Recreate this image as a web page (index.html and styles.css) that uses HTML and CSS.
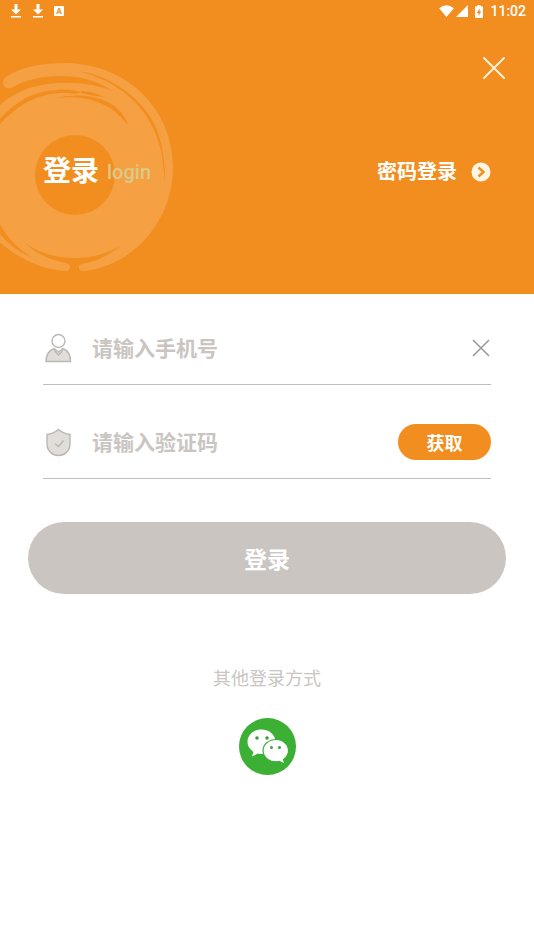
FILE: index.html
```html
<!DOCTYPE html>
<html lang="zh-CN">
<head>
<meta charset="utf-8">
<meta name="viewport" content="width=device-width, initial-scale=1">
<title>登录</title>
<link rel="stylesheet" href="styles.css">
</head>
<body>
<header class="hero">
  <svg class="swirl" viewBox="0 0 180 294" aria-hidden="true">
    <path class="swirl-light" d="M6 77C22 66 44 63 66 63C128 64 173 110 173 167C173 220 134 266 84 271C77 271 77 264 83 263L70 264C71 268 69 271 65 271C40 269 18 259 -5 238V110L0 105C10 96 22 90 33 87C60 80 90 82 113 91C100 83 85 76 60 76C40 76 26 80 13 87C4 92 0 82 6 77Z"/>
    <g class="swirl-dark">
      <circle cx="75" cy="175" r="40"/>
      <path d="M78 71C100 74 127 86 147 112C160 130 165 152 165 182C163 168 163 160 161 150C157 136 153 126 145 114C129 92 108 79 78 71Z"/>
      <path d="M-2 121C14 102 34 91 56 90C66 89 74 90 81 92C78 94 73 94 68 93C40 92 19 103 -2 126Z"/>
      <path d="M57 98C78 93 99 96 113 105C121 111 126 118 128 125C120 116 116 112 110 108C93 98 75 96 57 98ZM81 91C87 91 96 93 104 97C96 96 89 95 81 93Z"/>
      <path d="M24 242C40 254 57 258 75 258C92 258 106 254 120 246C108 256 95 262 82 264C77 265 78 271 82 272H67C72 270 71 264 66 263C50 260 36 254 24 242Z"/>
      <path d="M-2 221C6 236 16 248 33 258C18 252 6 243 -2 231Z"/>
    </g>
  </svg>

  <div class="status">
    <div class="status-group">
      <svg class="glyph-arrow" viewBox="0 0 12 14"><path d="M4.500 0h3v5.500H11L6 10.500 1 5.500h3.500zM1 12h10v1.500H1z"/></svg>
      <svg class="glyph-arrow" viewBox="0 0 12 14"><path d="M4.500 0h3v5.500H11L6 10.500 1 5.500h3.500zM1 12h10v1.500H1z"/></svg>
      <svg class="glyph-app" viewBox="0 0 10 10"><path fill-rule="evenodd" d="M1 0h8q1 0 1 1v8q0 1-1 1H1q-1 0-1-1V1q0-1 1-1zM4.300 2L2.200 8h1.300l.4-1.300h2.200L6.500 8h1.300L5.700 2zM5 3.400l.7 2.200H4.300z"/></svg>
    </div>
    <div class="status-group status-right">
      <svg class="glyph-wifi" viewBox="0 0 16 13"><path d="M0 3.500Q8-3 16 3.500L8 13z"/></svg>
      <svg class="glyph-signal" viewBox="0 0 12 12"><path d="M12 0v12H0z"/></svg>
      <svg class="glyph-battery" viewBox="0 0 8 13"><path fill-rule="evenodd" d="M2.500 0h3v1.300H7q1 0 1 1V12q0 1-1 1H1q-1 0-1-1V2.300q0-1 1-1h1.500zM4.700 3.500L1.800 8h1.700v3l2.800-4.500H4.700z"/></svg>
      <span>11:02</span>
    </div>
  </div>

  <div class="hero-tools">
    <button class="icon-button" type="button" aria-label="关闭">
      <svg class="close-large" viewBox="0 0 24 24"><path d="M2 2l20 20M22 2L2 22"/></svg>
    </button>
  </div>

  <div class="hero-row">
    <h1 class="title">登录 <span class="subtitle">login</span></h1>
    <a class="mode-link" href="#password">密码登录
      <svg class="chevron" viewBox="0 0 20 20"><circle cx="10" cy="10" r="9.500"/><path d="M7.500 5.500l5 4.500-5 4.500"/></svg>
    </a>
  </div>
</header>

<main class="content">
  <form class="form">
    <div class="field">
      <label class="field-icon" for="phone" aria-label="手机号">
        <svg viewBox="0 0 28 30"><path class="fill" d="M2.500 28.500C2.500 21.500 5.500 17.500 10.500 15.500L15 19 19.500 15.500C24.500 17.500 27 21.500 27 28.500Z"/><path class="line" d="M11 15.500L11.500 18.500 15 22 18.500 18.500 19 15.500"/><circle class="head" cx="15" cy="8" r="6.500"/></svg>
      </label>
      <input class="field-input" id="phone" type="tel" placeholder="请输入手机号">
      <button class="icon-button" type="reset" aria-label="清除">
        <svg class="close-small" viewBox="0 0 20 20"><path d="M2 2l16 16M18 2L2 18"/></svg>
      </button>
    </div>
    <div class="field">
      <label class="field-icon" for="code" aria-label="验证码">
        <svg viewBox="0 0 28 30"><path class="fill" d="M15 2.500C18.500 5.500 22 7 26.500 7.500V17C26.500 24 21 28.500 15 28.500S3.500 24 3.500 17V7.500C8 7 11.500 5.500 15 2.500Z"/><path class="line" d="M11.500 16.500l3.500 3 5-6"/></svg>
      </label>
      <input class="field-input" id="code" type="text" inputmode="numeric" placeholder="请输入验证码">
      <button class="code-button" type="button">获取</button>
    </div>
    <button class="submit" type="submit">登录</button>
  </form>

  <section class="others">
    <p class="others-title">其他登录方式</p>
    <button class="icon-button" type="button" aria-label="微信登录">
      <svg class="wechat" viewBox="0 0 57 57">
        <circle cx="28.500" cy="28.500" r="28.500" fill="#3bb034"/>
        <path fill="#fff" d="M22.500 11.500C14.500 11.500 8.500 17 8.500 23.500C8.500 28 11 31.500 14.500 33.800L13 38.500 18.800 35.500C20.800 36 23 36.200 25 36L36.500 24C36.500 17 30.500 11.500 22.500 11.500Z"/>
        <path fill="#fff" stroke="#3bb034" stroke-width="1.200" d="M37 21.500C44 21.500 49.500 26.500 49.500 32.500C49.500 36.500 47.500 39.500 44.500 41.500L46 46.500 40.500 43.300C31.500 45.500 24 40 24 32.500C24 26.500 30 21.500 37 21.500Z"/>
        <g fill="#3b9a4c"><circle cx="18" cy="20" r="1.800"/><circle cx="28" cy="20" r="1.800"/><circle cx="32.500" cy="29.500" r="1.500"/><circle cx="40.500" cy="29.500" r="1.500"/></g>
      </svg>
    </button>
  </section>
</main>
</body>
</html>
```
FILE: styles.css
```css
:root {
  --orange: #f18e1f;
  --grey: #cac5c1;
}

* {
  box-sizing: border-box;
}

body {
  margin: 0;
  background: #fff;
  font-family: Roboto, "Noto Sans CJK SC", sans-serif;
}

svg {
  display: block;
}

button {
  border: 0;
  padding: 0;
  font-family: inherit;
  cursor: pointer;
}

.icon-button {
  background: none;
}

.hero {
  position: relative;
  padding-bottom: 98px;
  background: var(--orange);
  color: #fff;
}

.swirl {
  position: absolute;
  top: 0;
  left: 0;
  width: 180px;
  height: 294px;
}

.swirl-light {
  fill: #f5a043;
}

.swirl-dark {
  fill: var(--orange);
}

.status,
.hero-tools,
.hero-row {
  position: relative;
  display: flex;
  align-items: center;
  justify-content: space-between;
}

.status {
  height: 22px;
  padding: 0 8px 0 10px;
  font-size: 14px;
  line-height: 22px;
  font-weight: 500;
}

.status-group {
  display: flex;
  align-items: center;
  gap: 10px;
}

.status-right {
  gap: 2px;
}

.status svg {
  fill: #fff;
}

.glyph-arrow {
  width: 12px;
  height: 14px;
}

.glyph-app {
  width: 10px;
  height: 10px;
}

.glyph-wifi {
  width: 15px;
  height: 12px;
}

.glyph-signal {
  width: 12px;
  height: 12px;
}

.glyph-battery {
  width: 8px;
  height: 13px;
  margin: 0 5px;
}

.hero-tools {
  justify-content: flex-end;
  padding: 34px 28px 0;
}

.close-large {
  width: 24px;
  height: 24px;
  fill: none;
  stroke: #fff0d8;
  stroke-width: 2;
  stroke-linecap: round;
}

.hero-row {
  height: 48px;
  margin-top: 68px;
  padding: 0 43px;
}

.title {
  display: flex;
  align-items: center;
  gap: 8px;
  margin: 0;
  font-size: 28px;
  line-height: 42px;
  font-weight: 700;
}

.subtitle {
  color: #dcc987;
  font-size: 20px;
  font-weight: 500;
}

.mode-link {
  display: flex;
  align-items: center;
  gap: 14px;
  color: #fff;
  font-size: 20px;
  line-height: 30px;
  font-weight: 700;
  text-decoration: none;
}

.chevron {
  width: 20px;
  height: 20px;
  fill: #fff6e4;
}

.chevron path {
  fill: none;
  stroke: var(--orange);
  stroke-width: 2.4;
}

.content {
  padding: 18px 28px 40px;
}

.form {
  display: flex;
  flex-direction: column;
}

.field {
  display: flex;
  align-items: center;
  height: 73px;
  margin: 0 15px 21px;
  border-bottom: 1px solid #bdbdbd;
}

.field-icon {
  margin-right: 20px;
}

.field-icon svg {
  width: 29px;
  height: 30px;
}

.field-icon path,
.field-icon circle {
  stroke: #bdb7b3;
  stroke-width: 1.4;
}

.field-icon .fill {
  fill: #e1ddd9;
}

.field-icon .line {
  fill: none;
}

.field-icon .head {
  fill: #fff;
}

.field-input {
  flex: 1;
  min-width: 0;
  padding: 2px 0 0;
  border: 0;
  outline: 0;
  background: none;
  color: #555;
  font-family: inherit;
  font-size: 21px;
  line-height: 32px;
  font-weight: 700;
}

.field-input::placeholder {
  color: var(--grey);
  opacity: 1;
}

.close-small {
  width: 20px;
  height: 20px;
  fill: none;
  stroke: #999;
  stroke-width: 1.6;
}

.code-button {
  width: 93px;
  height: 36px;
  border-radius: 18px;
  background: var(--orange);
  color: #fff;
  font-size: 18px;
  font-weight: 700;
}

.submit {
  height: 72px;
  margin-top: 22px;
  border-radius: 36px;
  background: var(--grey);
  color: #fff;
  font-size: 23px;
  font-weight: 700;
}

.others {
  display: flex;
  flex-direction: column;
  align-items: center;
  gap: 25px;
  margin-top: 71px;
}

.others-title {
  margin: 0;
  color: var(--grey);
  font-size: 18px;
  line-height: 28px;
}

.wechat {
  width: 57px;
  height: 57px;
}
```
